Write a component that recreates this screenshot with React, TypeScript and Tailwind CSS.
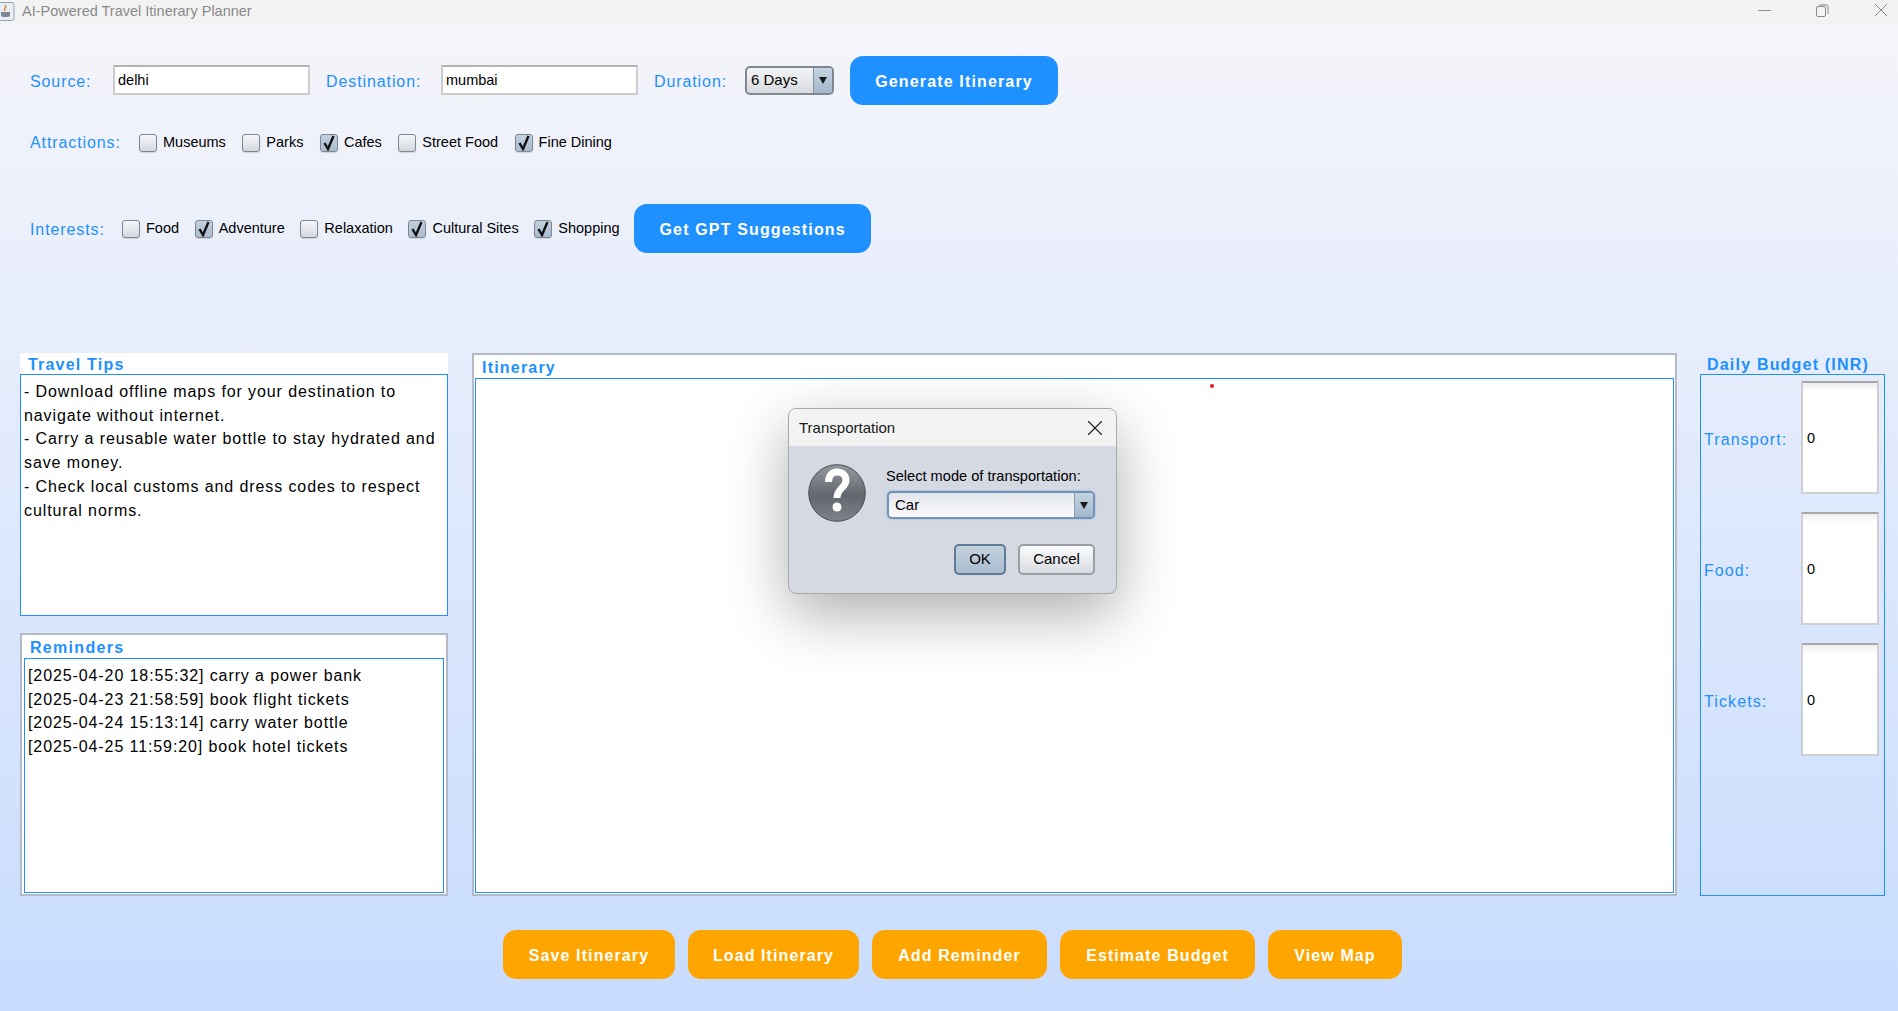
import React from 'react';
import { X, Minus } from 'lucide-react';

const sans = "font-['Liberation_Sans',Arial,sans-serif]";

// Java Nimbus style checkbox with its label
const Check = ({ label, checked }: { label: string; checked?: boolean }) => (
  <label className="flex items-center gap-[6px] text-[14.5px] text-black">
    <span
      className={`flex h-[18px] w-[18px] items-center justify-center rounded-[3px] border border-[#7d8694] shadow-[0_1px_1px_rgba(0,0,0,0.12)] ${
        checked ? 'bg-gradient-to-b from-[#c4d0de] to-[#a9bccf]' : 'bg-gradient-to-b from-[#f6f7f9] to-[#d4d8de]'
      }`}
    >
      {checked && (
        <svg width="14" height="16" viewBox="0 0 14 16">
          <path d="M2.5 8 L6 14 L11.5 1" fill="none" stroke="#111" strokeWidth="2.4" />
        </svg>
      )}
    </span>
    {label}
  </label>
);

const Label = ({ children, className = '' }: { children: React.ReactNode; className?: string }) => (
  <span className={`shrink-0 text-[16px] tracking-[0.9px] text-[#1e90ff] ${className}`}>{children}</span>
);

const TextField = ({ value }: { value: string }) => (
  <div className="mb-[2px] flex h-[30px] w-[197px] shrink-0 items-center border-2 border-[#cdcdcd] border-t-[#b3b3b3] bg-white pl-[3px] pt-[2px] text-[14.5px] text-black">
    {value}
  </div>
);

const Arrow = () => (
  <svg width="10" height="9" viewBox="0 0 10 9">
    <path d="M1 1 H9 L5 8 Z" fill="#1a1a1a" />
  </svg>
);

const BlueButton = ({ label, className = '' }: { label: string; className?: string }) => (
  <button className={`h-[49px] shrink-0 rounded-[13px] bg-[#1e90ff] pt-[2px] text-[16px] font-bold tracking-[1.15px] text-white ${className}`}>
    {label}
  </button>
);

const OrangeButton = ({ label, width }: { label: string; width: string }) => (
  <button className={`h-[49px] rounded-[13px] bg-[#ffa500] pt-[2px] text-[16px] font-bold tracking-[1.1px] text-white ${width}`}>
    {label}
  </button>
);

const BudgetField = ({ label }: { label: string }) => (
  <div className="flex h-[113px] items-center">
    <Label className="w-[97px] pt-[4px] tracking-[1.1px]">{label}</Label>
    <div className="flex h-full w-[78px] items-center border-2 border-[#cfcfcf] border-t-[#a8a8a8] bg-gradient-to-b from-[#ededed] via-white via-[8%] to-white pl-[4px] pt-[2px] text-[14.5px] text-black">
      0
    </div>
  </div>
);

const reminders = [
  '[2025-04-20 18:55:32] carry a power bank',
  '[2025-04-23 21:58:59] book flight tickets',
  '[2025-04-24 15:13:14] carry water bottle',
  '[2025-04-25 11:59:20] book hotel tickets',
];

const tips = [
  '- Download offline maps for your destination to',
  'navigate without internet.',
  '- Carry a reusable water bottle to stay hydrated and',
  'save money.',
  '- Check local customs and dress codes to respect',
  'cultural norms.',
];

const QuestionIcon = () => (
  <svg width="58" height="58" viewBox="0 0 58 58" className="shrink-0">
    <defs>
      <linearGradient id="q" x1="0" y1="0" x2="0" y2="1">
        <stop offset="0" stopColor="#94989f" />
        <stop offset="0.55" stopColor="#62666d" />
        <stop offset="1" stopColor="#7f838a" />
      </linearGradient>
    </defs>
    <circle cx="29" cy="29" r="28.3" fill="url(#q)" stroke="#4a4e55" />
    <path d="M20.5 18 C20.5 10.5 25 8 29 8 C35 8 38 12 38 16 C38 24 29 24 29 34" fill="none" stroke="#fff" strokeWidth="7" />
    <circle cx="29" cy="43" r="4.5" fill="#fff" />
  </svg>
);

const Dialog = () => (
  <div className="absolute left-[788px] top-[408px] w-[329px] overflow-hidden rounded-[8px] border border-[#a9a9a9] bg-[#d5d9e2] shadow-[0_20px_60px_rgba(0,0,0,0.32)]">
    <div className="flex h-[37px] items-center justify-between bg-[#f3f3f3] pl-[10px] pr-[8px] pt-[1px] text-[15px] text-[#1a1a1a]">
      Transportation
      <X size={26} strokeWidth={1} className="text-[#222]" />
    </div>
    <div className="flex h-[147px] pl-[19px] pt-[18px]">
      <QuestionIcon />
      <div className="ml-[20px] flex w-[209px] flex-col">
        <span className="mt-[2px] text-[14.6px] leading-[20px] text-black">Select mode of transportation:</span>
        <div className="ml-[1px] mt-[5px] flex h-[28px] items-stretch overflow-hidden rounded-[5px] border-2 border-[#6f93b8] bg-gradient-to-b from-[#e2e5ea] via-[#f0f1f4] to-[#fbfbfc] text-[15px] text-black shadow-[0_0_2px_#7aa3cf]">
          <span className="flex flex-1 items-center pl-[6px]">Car</span>
          <span className="flex w-[19px] items-center justify-center border-l border-[#8a9db2] bg-gradient-to-b from-[#c6d3e0] to-[#a3b8cd]">
            <Arrow />
          </span>
        </div>
        <div className="mt-[25px] flex justify-end gap-[12px] text-[15px] text-black">
          <button className="h-[31px] w-[52px] rounded-[5px] border-2 border-[#5f7b98] bg-gradient-to-b from-[#c5d2df] to-[#a9bdd0]">OK</button>
          <button className="h-[31px] w-[77px] rounded-[5px] border-2 border-[#9a9ea5] bg-gradient-to-b from-[#fafbfc] to-[#d9dce2]">Cancel</button>
        </div>
      </div>
    </div>
  </div>
);

export default function App() {
  return (
    <div className={`relative flex h-[1011px] w-[1898px] flex-col overflow-hidden ${sans}`}>
      {/* barra de título */}
      <div className="flex h-[25px] shrink-0 items-center bg-[#f3f3f3]">
        <svg width="15" height="19" viewBox="0 0 15 19" className="mb-[3px] shrink-0">
          <rect x="-4" y="0.5" width="18" height="18" rx="2" fill="#e9eef4" stroke="#8fa3b8" />
          <path d="M1 10 H10 V13 Q10 15 8 15 H3 Q1 15 1 13 Z" fill="#7b8794" />
          <path d="M5 3 Q7 5 5 6 Q4 7 5 9" fill="none" stroke="#d9822b" strokeWidth="1.4" />
        </svg>
        <span className="mb-[2px] ml-[7px] text-[14.5px] text-[#8a8a8a]">AI-Powered Travel Itinerary Planner</span>
        <div className="mb-[5px] ml-auto flex items-center text-[#8a8a8a]">
          <Minus size={21} strokeWidth={1.1} className="mr-[41px]" />
          <svg width="13" height="13" viewBox="0 0 13 13" fill="none" stroke="currentColor" className="mr-[40px]">
            <rect x="0.5" y="2.5" width="9" height="10" rx="1.5" />
            <path d="M3 1 H10.5 Q12 1 12 2.5 V10" />
          </svg>
          <X size={24} strokeWidth={1} className="mr-[5px]" />
        </div>
      </div>

      <div className="flex flex-1 flex-col bg-gradient-to-b from-[#f5f5fa] to-[#c8dcff] pl-[20px]">
        {/* linha de origem e destino */}
        <div className="mt-[31px] flex h-[49px] items-center pl-[10px]">
          <Label className="w-[83px] pt-[2px]">Source:</Label>
          <TextField value="delhi" />
          <Label className="ml-[16px] w-[115px] pt-[2px]">Destination:</Label>
          <TextField value="mumbai" />
          <Label className="ml-[16px] w-[91px] pt-[2px]">Duration:</Label>
          <div className="flex h-[29px] w-[89px] shrink-0 items-stretch overflow-hidden rounded-[5px] border-2 border-[#7f8791] bg-gradient-to-b from-[#f3f4f6] to-[#d7dade] text-[15px] text-black">
            <span className="flex flex-1 items-center pl-[4px]">6 Days</span>
            <span className="flex w-[19px] items-center justify-center border-l border-[#7f8fa0] bg-gradient-to-b from-[#c6d3e0] to-[#a3b8cd]">
              <Arrow />
            </span>
          </div>
          <BlueButton label="Generate Itinerary" className="ml-[16px] w-[208px]" />
        </div>

        <div className="mt-[19px] flex h-[38px] items-center gap-[16.5px] pl-[10px]">
          <Label className="w-[92.5px]">Attractions:</Label>
          <Check label="Museums" />
          <Check label="Parks" />
          <Check label="Cafes" checked />
          <Check label="Street Food" />
          <Check label="Fine Dining" checked />
        </div>

        <div className="mt-[42px] flex h-[49px] items-center gap-[15.6px] pl-[10px]">
          <Label className="w-[76.4px] pt-[2px]">Interests:</Label>
          <Check label="Food" />
          <Check label="Adventure" checked />
          <Check label="Relaxation" />
          <Check label="Cultural Sites" checked />
          <Check label="Shopping" checked />
          <BlueButton label="Get GPT Suggestions" className="-ml-[1px] w-[237px]" />
        </div>

        {/* paineis */}
        <div className="mt-[100px] flex h-[543px] text-[16px] tracking-[0.9px] text-black">
          <div className="flex w-[428px] flex-col">
            <section className="flex h-[263px] flex-col bg-white">
              <h2 className="h-[21px] pl-[8px] text-[16px] font-bold leading-[23px] tracking-[1.2px] text-[#1e90ff]">Travel Tips</h2>
              <div className="flex-1 border border-[#1e90ff] px-[3px] pt-[5px] leading-[23.7px]">
                {tips.map((t) => (
                  <div key={t}>{t}</div>
                ))}
              </div>
            </section>
            <section className="mt-[17px] flex h-[263px] flex-col border-2 border-[#b4bac6] bg-white px-[2px] pb-[1px]">
              <h2 className="h-[23px] pl-[6px] text-[16px] font-bold leading-[25px] tracking-[1.3px] text-[#1e90ff]">Reminders</h2>
              <div className="flex-1 border border-[#1e90ff] px-[3px] pt-[5px] leading-[23.7px]">
                {reminders.map((r) => (
                  <div key={r}>{r}</div>
                ))}
              </div>
            </section>
          </div>

          <section className="ml-[24px] flex w-[1205px] flex-col border-2 border-[#b4bac6] bg-white px-[1px] pb-[1px]">
            <h2 className="h-[23px] pl-[7px] text-[16px] font-bold leading-[26px] tracking-[1.2px] text-[#1e90ff]">Itinerary</h2>
            <div className="relative flex-1 border border-[#1e90ff]">
              <span className="absolute left-[734px] top-[5px] h-[4px] w-[4px] rounded-full bg-[#e02020]" />
            </div>
          </section>

          <section className="ml-[23px] flex w-[185px] flex-col">
            <h2 className="h-[21px] pl-[7px] text-[16px] font-bold leading-[23px] tracking-[1.2px] text-[#1e90ff]">Daily Budget (INR)</h2>
            <div className="flex flex-1 flex-col gap-[18px] border border-[#1e90ff] pl-[3px] pt-[6px]">
              <BudgetField label="Transport:" />
              <BudgetField label="Food:" />
              <BudgetField label="Tickets:" />
            </div>
          </section>
        </div>

        {/* botões de baixo */}
        <div className="ml-[483px] mt-[34px] flex gap-[13px]">
          <OrangeButton label="Save Itinerary" width="w-[172px]" />
          <OrangeButton label="Load Itinerary" width="w-[171px]" />
          <OrangeButton label="Add Reminder" width="w-[175px]" />
          <OrangeButton label="Estimate Budget" width="w-[195px]" />
          <OrangeButton label="View Map" width="w-[134px]" />
        </div>
      </div>

      <Dialog />
    </div>
  );
}
